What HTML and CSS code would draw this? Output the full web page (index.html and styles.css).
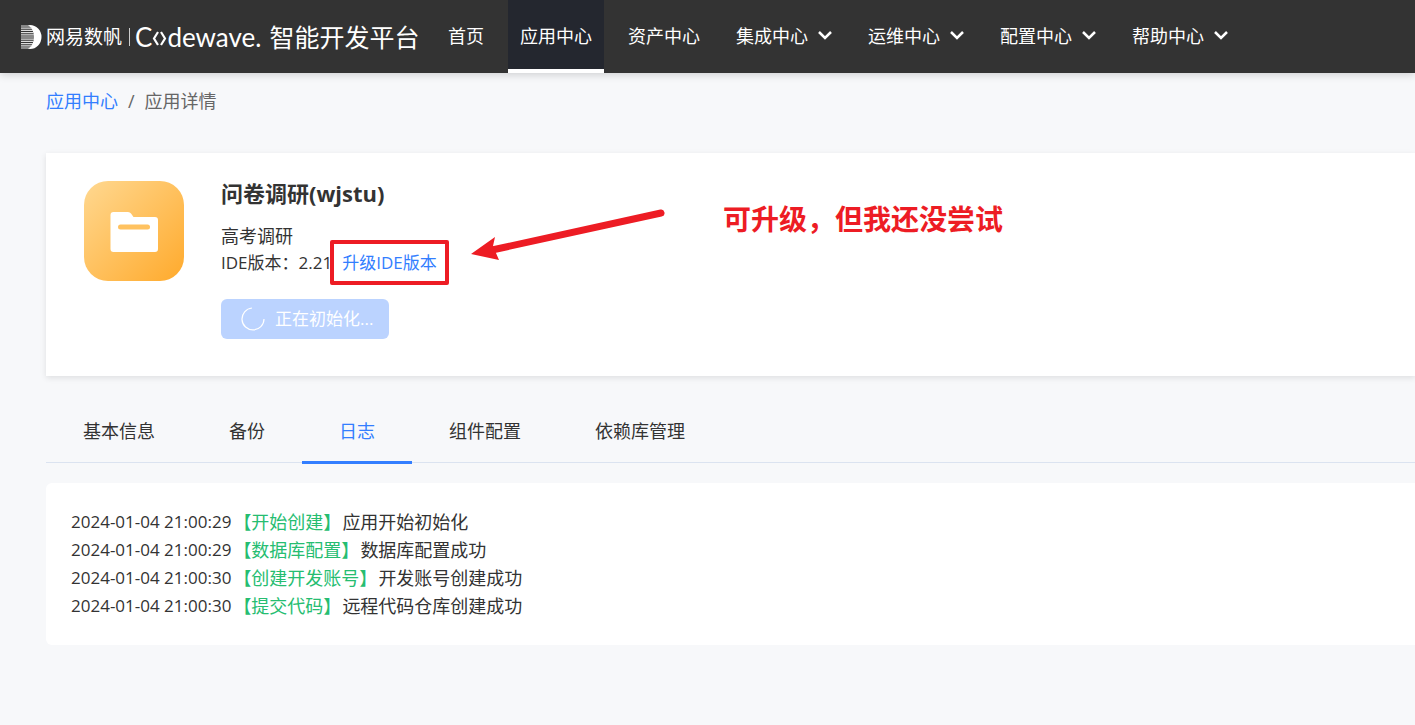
FILE: index.html
```html
<!DOCTYPE html>
<html lang="zh-CN">
<head>
<meta charset="utf-8">
<title>应用详情</title>
<link rel="stylesheet" href="styles.css">
</head>
<body>
<header class="topbar">
  <a class="brand" href="#">
    <svg class="brand-mark" width="21" height="24" viewBox="0 0 21 24" aria-hidden="true">
      <path d="M7 0H9A11.500 12 0 0 1 9 24H7C11 21 13 17 13 12S11 3 7 0Z" fill="#fff"/>
      <path d="M0 1H9M0 3.200H11M0 5.400H12M0 7.600H13M0 9.800H13M0 12H13M0 14.200H13M0 16.400H13M0 18.600H12M0 20.800H11M0 23H9" stroke="#ddd" stroke-width="1.200"/>
    </svg>
    <span class="brand-company">网易数帆</span>
    <span class="brand-line"></span>
    <span class="brand-product">C<svg class="brand-angle" width="15" height="15" viewBox="0 0 15 15" aria-hidden="true"><path d="M6 1L2 7.500L6 14M9 1L13 7.500L9 14" fill="none" stroke="#fff" stroke-width="2.200"/></svg>dewave.</span>
    <span class="brand-title">智能开发平台</span>
  </a>
  <nav class="nav">
    <a class="nav-item" href="#">首页</a>
    <a class="nav-item active" href="#">应用中心</a>
    <a class="nav-item" href="#">资产中心</a>
    <a class="nav-item" href="#">集成中心<svg class="chevron" viewBox="0 0 14 10"><path d="M1 1L7 7L13 1"/></svg></a>
    <a class="nav-item" href="#">运维中心<svg class="chevron" viewBox="0 0 14 10"><path d="M1 1L7 7L13 1"/></svg></a>
    <a class="nav-item" href="#">配置中心<svg class="chevron" viewBox="0 0 14 10"><path d="M1 1L7 7L13 1"/></svg></a>
    <a class="nav-item" href="#">帮助中心<svg class="chevron" viewBox="0 0 14 10"><path d="M1 1L7 7L13 1"/></svg></a>
  </nav>
</header>
<main class="page">
  <nav class="breadcrumb">
    <a href="#">应用中心</a><span>/</span><span>应用详情</span>
  </nav>
  <section class="app-card">
    <svg class="app-icon" width="100" height="100" viewBox="0 0 100 100" aria-hidden="true">
      <defs>
        <linearGradient id="amber" x1="0" y1="0" x2="1" y2="1">
          <stop offset="0" stop-color="#ffd890"/>
          <stop offset="1" stop-color="#ffaa2c"/>
        </linearGradient>
      </defs>
      <rect width="100" height="100" rx="24" fill="url(#amber)"/>
      <path d="M29.500 31H44Q46 31 47 32.500L49.500 36H71Q74 36 74 39V68Q74 71 71 71H29.500Q26.500 71 26.500 68V34Q26.500 31 29.500 31Z" fill="#fff"/>
      <rect x="34" y="43.500" width="32" height="5" rx="2.500" fill="#ffc260"/>
    </svg>
    <div class="app-info">
      <h1 class="app-name">问卷调研(wjstu)</h1>
      <p class="app-line">高考调研</p>
      <p class="app-line version">IDE版本：2.21<a class="upgrade" href="#">升级IDE版本</a></p>
      <button class="init-button" type="button" disabled>
        <svg width="24" height="24" viewBox="0 0 24 24" aria-hidden="true"><path d="M11 1A11 11 0 1 0 23 12" fill="none" stroke="#fff" stroke-width="1.200"/></svg>
        正在初始化...
      </button>
    </div>
    <svg class="arrow" width="196" height="56" viewBox="0 0 196 56" aria-hidden="true">
      <path d="M191 6L22 43" stroke="#ed1c24" stroke-width="7" stroke-linecap="round"/>
      <path d="M1 47L25 30L23 39L29 53Z" fill="#ed1c24"/>
    </svg>
    <strong class="remark">可升级，但我还没尝试</strong>
  </section>
  <nav class="tabs">
    <a class="tab" href="#">基本信息</a>
    <a class="tab" href="#">备份</a>
    <a class="tab current" href="#">日志</a>
    <a class="tab" href="#">组件配置</a>
    <a class="tab" href="#">依赖库管理</a>
  </nav>
  <ul class="log">
    <li><time>2024-01-04 21:00:29</time><span class="stage">【开始创建】</span>应用开始初始化</li>
    <li><time>2024-01-04 21:00:29</time><span class="stage">【数据库配置】</span>数据库配置成功</li>
    <li><time>2024-01-04 21:00:30</time><span class="stage">【创建开发账号】</span>开发账号创建成功</li>
    <li><time>2024-01-04 21:00:30</time><span class="stage">【提交代码】</span>远程代码仓库创建成功</li>
  </ul>
</main>
</body>
</html>
```

FILE: styles.css
```css
* { box-sizing: border-box; }

body {
  margin: 0;
  background: #f7f8fa;
  color: #333;
  font: 18px/26px "Open Sans", "Noto Sans CJK SC", sans-serif;
}

a { color: #337eff; text-decoration: none; }

.topbar {
  display: flex;
  align-items: stretch;
  height: 73px;
  padding-left: 21px;
  background: #333;
  box-shadow: 0 2px 8px rgba(0, 0, 0, 0.16);
  white-space: nowrap;
}

.brand {
  display: flex;
  align-items: center;
  width: 415px;
  color: #fff;
}

.brand-company {
  margin-left: 4px;
  font-size: 19px;
}

.brand-line {
  width: 1px;
  height: 18px;
  margin: 0 5px 0 7px;
  background: #ccc;
}

.brand-product {
  display: flex;
  align-items: center;
  font-family: Lato, sans-serif;
  font-size: 26px;
}

.brand-angle { margin-top: 4px; }

.brand-title {
  margin-left: 8px;
  font-size: 25px;
}

.nav {
  display: flex;
  gap: 12px;
}

.nav-item {
  display: flex;
  align-items: center;
  padding: 0 12px 2px;
  color: #fff;
}

.nav-item.active {
  padding-top: 2px;
  padding-bottom: 0;
  border-bottom: 4px solid #fff;
  background: #24272f;
}

.chevron {
  width: 14px;
  height: 10px;
  margin-left: 10px;
  fill: none;
  stroke: #fff;
  stroke-width: 2.5;
}

.page { padding: 15px 0 80px 46px; }

.breadcrumb {
  display: flex;
  gap: 10px;
  color: #666;
}

.app-card {
  position: relative;
  display: flex;
  gap: 37px;
  margin-top: 39px;
  padding: 28px 38px 37px;
  background: #fff;
  box-shadow: 0 2px 6px rgba(0, 0, 0, 0.1);
}

.app-icon { flex: none; }

.app-name {
  margin: 0 0 18px;
  font-size: 22px;
  line-height: 24px;
}

.app-line { margin: 0; }

.version {
  font-size: 17px;
  line-height: 28px;
}

.upgrade {
  position: relative;
  margin-left: 10px;
}

.upgrade::after {
  content: "";
  position: absolute;
  inset: -11px -12px;
  border: 4px solid #ed1c24;
  border-radius: 2px;
}

.init-button {
  display: flex;
  align-items: center;
  gap: 10px;
  height: 40px;
  margin-top: 22px;
  padding: 0 16px 0 20px;
  border: 0;
  border-radius: 6px;
  background: #bbd3ff;
  color: #fff;
  font: inherit;
  font-size: 17px;
}

.arrow {
  position: absolute;
  left: 424px;
  top: 54px;
}

.remark {
  position: absolute;
  left: 677px;
  top: 46px;
  color: #ed1c24;
  font-size: 28px;
  line-height: 40px;
}

.tabs {
  display: flex;
  margin-top: 24px;
  border-bottom: 1px solid #dbe3f0;
}

.tab {
  margin-bottom: -2px;
  padding: 18px 37px 17px;
  border-bottom: 3px solid transparent;
  color: #333;
}

.tab.current {
  border-color: #337eff;
  color: #337eff;
}

.log {
  margin: 20px 0 0;
  padding: 25px 25px;
  border-radius: 6px 0 0 6px;
  background: #fff;
  line-height: 28px;
  list-style: none;
}

.log li {
  display: flex;
  align-items: center;
}

.log time { font-size: 17px; }

.stage {
  margin: 0 1px 0 2px;
  color: #26bd71;
}
```
